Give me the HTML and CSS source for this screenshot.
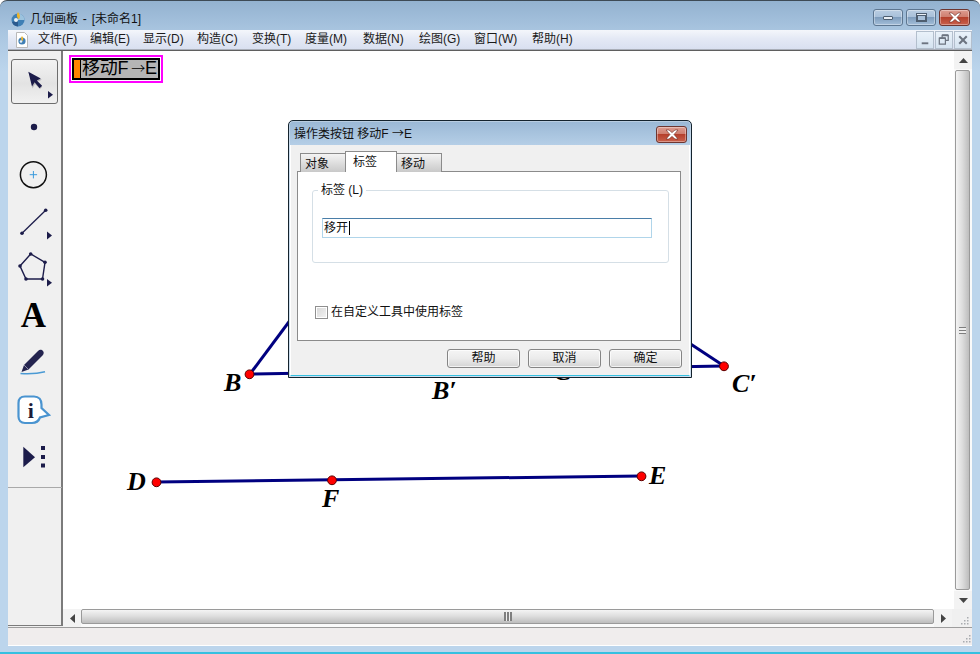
FILE: index.html
```html
<!DOCTYPE html>
<html lang="zh-CN">
<head>
<meta charset="utf-8">
<title>几何画板</title>
<link rel="stylesheet" href="styles.css">
</head>
<body>
<div class="window">
  <header class="titlebar">
    <svg class="app-icon" viewBox="0 0 16 16"><circle cx="8" cy="9" r="6.5" fill="#3f7fb5"/><path d="M8 2.5a6.5 6.5 0 0 1 6.5 6.5H8z" fill="#9cc3de"/><path d="M2 11a6.5 6.5 0 0 0 6 4.4V9z" fill="#2b5a8e"/><path d="M8 1c2 2 2.6 5 1 7-2-.6-3-4 -1-7z" fill="#f0b429"/><circle cx="6" cy="9" r="2" fill="#e8f1f7"/></svg>
    <span class="title-text">几何画板 - [未命名1]</span>
    <div class="win-controls">
      <div class="win-btn"><span class="glyph-min"></span></div>
      <div class="win-btn"><span class="glyph-max"></span></div>
      <div class="win-btn close"><svg class="glyph-x" viewBox="0 0 16 11"><path d="M2 1h3l3 2.6L11 1h3l-4 4.5 4 4.5h-3L8 7.4 5 10H2l4-4.5z" fill="#fff" stroke="#6b2a22" stroke-width=".6"/></svg></div>
    </div>
  </header>

  <div class="client">
    <nav class="menubar">
      <svg class="doc-icon" viewBox="0 0 14 16"><path d="M1.5.5h8l3 3v12h-11z" fill="#fff" stroke="#b9b9b9"/><circle cx="7" cy="9" r="3.6" fill="#3f7fb5"/><path d="M7 4c1.4 1.4 1.6 3.6.5 5-1.400-.5-2-3-.5-5z" fill="#f0b429"/><circle cx="6" cy="9.500" r="1.300" fill="#e8f1f7"/></svg>
      <span class="menu-item">文件(F)</span>
      <span class="menu-item">编辑(E)</span>
      <span class="menu-item">显示(D)</span>
      <span class="menu-item">构造(C)</span>
      <span class="menu-item">变换(T)</span>
      <span class="menu-item">度量(M)</span>
      <span class="menu-item">数据(N)</span>
      <span class="menu-item">绘图(G)</span>
      <span class="menu-item">窗口(W)</span>
      <span class="menu-item">帮助(H)</span>
      <div class="mdi-controls">
        <div class="mdi-btn"><svg viewBox="0 0 17 17"><rect x="5" y="11" width="7" height="2" fill="#6c7480"/></svg></div>
        <div class="mdi-btn"><svg viewBox="0 0 17 17"><path d="M6.500 6V3.500h6.500V9H10.500M3.500 6.500H10V13H3.500z" fill="none" stroke="#6c7480" stroke-width="1.300"/><path d="M3.500 6.500H10M6.500 3.500h6.500" stroke="#6c7480" stroke-width="2"/></svg></div>
        <div class="mdi-btn"><svg viewBox="0 0 17 17"><path d="M4.500 4.500l8 8M12.500 4.500l-8 8" stroke="#6c7480" stroke-width="2.200"/></svg></div>
      </div>
    </nav>

    <div class="main">
      <aside class="tools">
        <div class="tool selected">
          <svg class="tool-svg-sel" viewBox="12 60 45 43">
            <path d="M29.500 73.500l3 15 2.500-4.500 5 5 2.300-2.300-5-5 4.500-2z" fill="#8f8f96" opacity=".55"/>
            <path d="M28.300 71.700l3.700 14.800 2.600-4.300 5 6 2.500-2.400-5.300-5.300 4-2z" fill="#1c1c4a"/>
            <path d="M48 91l5 3.800-5 3.800z" fill="#1c1c4a"/>
          </svg>
        </div>
        <div class="tool"><svg viewBox="8 104 54 47"><circle cx="34" cy="127" r="3.200" fill="#1c1c4a"/></svg></div>
        <div class="tool"><svg viewBox="8 151 54 47"><circle cx="33.400" cy="174.700" r="13" fill="none" stroke="#111" stroke-width="1.500"/><path d="M33.400 171v7.400M29.700 174.700h7.400" stroke="#3b9bdc" stroke-width="1"/></svg></div>
        <div class="tool"><svg viewBox="8 198 54 47"><path d="M22 233.300L45.700 210.300" stroke="#1c1c4a" stroke-width="1.300"/><circle cx="22" cy="233.300" r="1.800" fill="#1c1c4a"/><circle cx="45.700" cy="210.300" r="1.800" fill="#1c1c4a"/><path d="M47 231.500l5 4-5 4z" fill="#1c1c4a"/></svg></div>
        <div class="tool"><svg viewBox="8 245 54 47"><path d="M20 266L30.700 254 45 262.300 42.500 279H26z" fill="none" stroke="#1c1c4a" stroke-width="1.400"/><g fill="#1c1c4a"><circle cx="20" cy="266" r="1.800"/><circle cx="30.700" cy="254" r="1.800"/><circle cx="45" cy="262.300" r="1.800"/><circle cx="42.500" cy="279" r="1.800"/><circle cx="26" cy="279" r="1.800"/><path d="M47 279l5 3.800-5 3.800z"/></g></svg></div>
        <div class="tool"><svg viewBox="8 292 54 47"><text class="tool-a" x="33.500" y="326.500">A</text></svg></div>
        <div class="tool"><svg viewBox="8 339 54 47"><path d="M21.500 372l2.500-7 14-14c2-2 4-1 5 0s1 3-.5 4.500l-14 14z" fill="#24244f"/><path d="M24 365l4.500 4.500" stroke="#8e8ea8" stroke-width="1"/><path d="M20.500 373.500c8 .5 16 .5 24.500-1.800" fill="none" stroke="#4a9ad4" stroke-width="1.600"/></svg></div>
        <div class="tool"><svg viewBox="8 386 54 47"><path d="M25 396.500h9c5 0 7.500 3.500 7.500 8v3.500l7.500 7-9 2.500c-1.500 4-4 5.500-8 5.500H25c-4.500 0-6.500-3-6.500-6.500V403c0-4 2.500-6.500 6.500-6.500z" fill="#fff" stroke="#4a94d0" stroke-width="2.200"/><text class="tool-i" x="30.700" y="418">i</text></svg></div>
        <div class="tool"><svg viewBox="8 433 54 47"><path d="M23.300 446.700L35 457.300 23.300 467.300z" fill="#1c1c4a"/><path d="M41 446h4v4h-4zM41 455h4v4h-4zM41 463.500h4v4h-4z" fill="#1c1c4a"/></svg></div>
        <div class="tools-sep"></div>
      </aside>

      <div class="work">
        <div class="work-top">
          <div class="canvas">
            <svg class="sketch" viewBox="63 51 891 558">
              <g class="seg">
                <path d="M250 374L300 307"/>
                <path d="M250 374L724 366"/>
                <path d="M724 366L680 337"/>
                <path d="M156 482L641 476"/>
              </g>
              <g class="pt">
                <circle cx="249.500" cy="374.300" r="4.400"/>
                <circle cx="724" cy="366.300" r="4.400"/>
                <circle cx="156.500" cy="482.300" r="4.400"/>
                <circle cx="332" cy="480.300" r="4.400"/>
                <circle cx="641.500" cy="476.300" r="4.400"/>
              </g>
              <g class="lbl">
                <text x="224" y="391">B</text>
                <text x="432" y="399">B′</text>
                <text x="554" y="380">C</text>
                <text x="732" y="392">C′</text>
                <text x="127" y="490">D</text>
                <text x="649" y="484">E</text>
                <text x="322" y="507">F</text>
              </g>
            </svg>
            <div class="action-btn">
              <div class="action-inner"><span class="action-swatch"></span><span class="action-text">移动F <span class="arrow">→</span>E</span></div>
            </div>
          </div>
          <div class="vscroll">
            <div class="arrow-cell"><svg viewBox="0 0 9 5"><path d="M4.500 0L9 5H0z" fill="#444"/></svg></div>
            <div class="vthumb"><span class="grip-v"></span></div>
            <div class="arrow-cell"><svg viewBox="0 0 9 5"><path d="M0 0h9L4.500 5z" fill="#444"/></svg></div>
          </div>
        </div>
        <div class="hscroll">
          <div class="arrow-cell-h"><svg viewBox="0 0 5 9"><path d="M5 0v9L0 4.500z" fill="#444"/></svg></div>
          <div class="hthumb"><span class="grip-h"></span></div>
          <div class="arrow-cell-h"><svg viewBox="0 0 5 9"><path d="M0 0l5 4.500L0 9z" fill="#444"/></svg></div>
          <div class="corner"><svg class="size-grip" viewBox="0 0 9 9"><path d="M7 1h1.500v1.500H7zM7 4h1.500v1.500H7zM4 4h1.500v1.500H4zM7 7h1.500v1.500H7zM4 7h1.500v1.500H4zM1 7h1.500v1.500H1z" fill="#a9acb0"/></svg></div>
        </div>
      </div>
    </div>

    <footer class="statusbar"><svg class="size-grip" viewBox="0 0 9 9"><path d="M7 1h1.500v1.500H7zM7 4h1.500v1.500H7zM4 4h1.500v1.500H4zM7 7h1.500v1.500H7zM4 7h1.500v1.500H4zM1 7h1.500v1.500H1z" fill="#a9acb0"/></svg></footer>
  </div>

  <section class="dialog">
    <div class="dlg-title">
      <span>操作类按钮 移动F <span class="arrow-small">→</span>E</span>
      <div class="win-btn close dlg-close"><svg class="glyph-x" viewBox="0 0 16 11"><path d="M2 1h3l3 2.600L11 1h3l-4 4.500 4 4.500h-3L8 7.400 5 10H2l4-4.500z" fill="#fff" stroke="#6b2a22" stroke-width=".6"/></svg></div>
    </div>
    <div class="dlg-body">
      <div class="tabs">
        <span class="tab">对象</span>
        <span class="tab active">标签</span>
        <span class="tab">移动</span>
      </div>
      <div class="pane">
        <fieldset class="group">
          <legend class="group-legend">标签 (L)</legend>
          <div class="input"><span>移开</span><span class="caret"></span></div>
        </fieldset>
        <label class="check"><span class="checkbox"></span><span>在自定义工具中使用标签</span></label>
      </div>
      <div class="dlg-buttons">
        <span class="btn">帮助</span>
        <span class="btn">取消</span>
        <span class="btn">确定</span>
      </div>
    </div>
  </section>
</div>
</body>
</html>
```
FILE: styles.css
```css
* { box-sizing: border-box; }
html, body { margin: 0; padding: 0; background: #fff; }
body { font: 12px/1.2 "Liberation Sans", "Noto Sans CJK SC", sans-serif; color: #111; }
svg { display: block; }

.window {
  position: relative;
  width: 980px;
  height: 654px;
  display: flex;
  flex-direction: column;
  overflow: hidden;
  border-radius: 7px 7px 0 0;
  border-top: 1px solid #3d4a55;
  border-bottom: 2px solid #35c0e0;
  background: linear-gradient(#93b2d0 0, #a9c5e0 30px, #bcd5ec 70px, #bcd5ec 100%);
}

/* title bar */
.titlebar { height: 29px; flex: none; display: flex; align-items: center; padding: 7px 10px 0 10px; }
.app-icon { width: 16px; height: 16px; margin-right: 4px; }
.title-text { color: #111; word-spacing: 1.500px; }
.win-controls { margin-left: auto; display: flex; gap: 3px; margin-top: -3px; }
.win-btn {
  width: 30px; height: 17px;
  display: flex; align-items: center; justify-content: center;
  border: 1px solid #5d7690; border-radius: 3px;
  background: linear-gradient(#b9cde2 0, #a9c1da 45%, #7f9dbd 50%, #a3bed9 100%);
  box-shadow: inset 0 0 0 1px rgba(255,255,255,.35);
}
.win-btn.close { width: 31px; border-color: #6e3630; background: linear-gradient(#dd9c90 0, #cf7f70 45%, #b5402c 50%, #c9614c 100%); }
.glyph-min { width: 10px; height: 4px; background: #e9eff6; border: 1px solid #4e5e70; border-radius: 1px; }
.glyph-max { width: 11px; height: 9px; border: 1px solid #4e5e70; background: #e9eff6; display: flex; align-items: center; justify-content: center; }
.glyph-max::before { content: ""; width: 7px; height: 4px; background: #a9c1da; border: 1px solid #4e5e70; }
.glyph-x { width: 16px; height: 11px; }

/* client */
.client { flex: 1; margin: 0 8px 6px; display: flex; flex-direction: column; min-height: 0; }

.menubar {
  height: 20px; flex: none;
  display: flex; align-items: center;
  padding-left: 7px;
  background: linear-gradient(#f4f6fb 0, #e4e9f5 45%, #d9e0f0 100%);
  border-bottom: 1px solid #a9aeb8;
}
.doc-icon { width: 14px; height: 16px; margin-right: 9px; }
.menu-item { flex: none; color: #1a1a1a; white-space: nowrap; width: 53px; }
.menu-item:nth-of-type(1) { width: 52px; }
.menu-item:nth-of-type(3) { width: 54px; }
.menu-item:nth-of-type(4) { width: 55px; }
.menu-item:nth-of-type(6) { width: 58px; }
.menu-item:nth-of-type(7) { width: 56px; }
.menu-item:nth-of-type(8) { width: 55px; }
.menu-item:nth-of-type(9) { width: 58px; }
.mdi-controls { margin-left: auto; display: flex; gap: 1px; }
.mdi-btn { width: 18px; height: 18px; border: 1px solid #b3bfcd; background: linear-gradient(#eaf2fa, #d5e3f0); }

.main { height: 577px; flex: none; display: flex; border-top: 1px solid #5f5f5f; background: #f0f0f0; }

/* tools */
.tools {
  width: 55px; flex: none; height: 575px;
  padding-top: 8px;
  display: flex; flex-direction: column;
  background: #f0f0f0;
  border-right: 2px solid #7b7b7b;
  border-bottom: 1px solid #7b7b7b;
}
.tool { width: 53px; height: 47px; flex: none; }
.tool svg { width: 54px; height: 47px; }
.tool.selected {
  width: 47px; height: 45px; margin-left: 3px;
  border: 1px solid #6d6d6d; border-radius: 3px;
  background: linear-gradient(#f3f3f3 0, #e3e3e3 55%, #f1f1f1 100%);
}
.tool-svg-sel.tool-svg-sel { width: 45px; height: 43px; }
.tools-sep { margin-top: 7px; border-top: 1px solid #a9a9a9; margin-right: -1px; }
.tool-a { font: bold 35px "Liberation Serif", serif; text-anchor: middle; fill: #000; }
.tool-i { font: bold 22px "Liberation Serif", serif; text-anchor: middle; fill: #1c1c3a; }

/* workspace */
.work { flex: 1; display: flex; flex-direction: column; min-width: 0; }
.work-top { flex: 1; display: flex; min-height: 0; }
.canvas { position: relative; flex: 1; background: #fff; min-width: 0; }
.sketch { position: absolute; left: 0; top: 0; width: 891px; height: 558px; }
.seg path { stroke: #000080; stroke-width: 3; fill: none; }
.pt circle { fill: #f00; stroke: #5a0000; stroke-width: 1; }
.lbl text { font: italic bold 26px "Liberation Serif", serif; fill: #000; }

.action-btn { position: absolute; left: 6px; top: 4px; width: 94px; height: 28px; border: 2px solid #f0f; background: #fff; padding: 1px; }
.action-inner { height: 22px; border: 2px solid #000; display: flex; background: #b5b5b5; }
.action-swatch { flex: none; width: 7px; margin-right: 1px; background: #ff8400; border-right: 1px solid #000; }
.action-text { flex: none; font-size: 18px; line-height: 17px; color: #000; white-space: nowrap; letter-spacing: -.2px; word-spacing: -2px; }
.arrow { font: 300 14px/1 "Noto Sans CJK SC", sans-serif; vertical-align: 1px; }
.arrow-small { font-family: "Noto Sans CJK SC", sans-serif; }

.vscroll { width: 18px; flex: none; display: flex; flex-direction: column; background: #fafafa; }
.arrow-cell { height: 18px; flex: none; display: flex; align-items: center; justify-content: center; background: #f3f3f3; }
.arrow-cell svg { width: 9px; height: 5px; }
.vthumb { flex: 1; margin: 1px 2px 1px 1px; border: 1px solid #9a9a9a; border-radius: 2px; background: linear-gradient(90deg, #f4f4f4, #dcdcdc 50%, #bdbdbd); display: flex; align-items: center; justify-content: center; }
.grip-v { width: 7px; height: 7px; background: repeating-linear-gradient(#7e7e7e 0 1px, #eee 1px 3px); }

.hscroll { height: 18px; flex: none; display: flex; background: #fafafa; }
.arrow-cell-h { width: 18px; flex: none; display: flex; align-items: center; justify-content: center; background: #f3f3f3; }
.arrow-cell-h svg { width: 5px; height: 9px; }
.hthumb { flex: 1; margin: 0 0 3px; border: 1px solid #9a9a9a; border-radius: 2px; background: linear-gradient(#f4f4f4, #dcdcdc 50%, #bdbdbd); display: flex; align-items: center; justify-content: center; }
.grip-h { width: 8px; height: 9px; background: repeating-linear-gradient(90deg, #7e7e7e 0 2px, #eee 2px 3px); }
.corner { width: 20px; flex: none; display: flex; align-items: flex-end; justify-content: flex-end; padding: 0 3px 2px 0; background: #f0f0f0; }
.size-grip { width: 9px; height: 9px; }

.statusbar {
  height: 19px; flex: none;
  display: flex; align-items: flex-end; justify-content: flex-end;
  padding: 0 1px 2px 0;
  border-top: 1px solid #9d9d9d;
  border-bottom: 1px solid #fff;
  background: #f0eded;
}

/* dialog */
.dialog {
  position: absolute; left: 288px; top: 119px;
  width: 404px; height: 258px;
  display: flex; flex-direction: column;
  border: 1px solid #14232e;
  border-radius: 5px 5px 0 0;
  background: linear-gradient(#9ab8d5 0, #b7d0e8 26px);
  box-shadow: inset 0 0 0 1px rgba(255,255,255,.3);
  padding: 0 1px 1px;
}
.dlg-title { height: 24px; flex: none; display: flex; align-items: center; justify-content: space-between; padding: 1px 3px 0 4px; }
.dlg-close { margin-top: 1px; }
.dlg-body { flex: 1; background: #f0f0f0; border-bottom: 1px solid #35c0e0; border-left: 1px solid #fff; border-right: 1px solid #fff; padding: 6px 8px 0 6px; display: flex; flex-direction: column; }

.tabs { height: 21px; flex: none; display: flex; align-items: flex-end; padding-left: 3px; position: relative; z-index: 1; margin-bottom: -1px; }
.tab { width: 46px; height: 19px; padding: 3px 0 0 4px; border: 1px solid #8b8b8b; border-bottom: 0; margin-right: -1px; background: linear-gradient(#f4f4f4, #dcdcdc 55%, #c9c9c9); }
.tab.active { width: 52px; height: 21px; background: #fff; padding: 3px 0 0 7px; border-bottom: 0; position: relative; z-index: 2; }

.pane { height: 170px; flex: none; background: #fff; border: 1px solid #8b8b8b; padding: 11px 11px 0 14px; display: flex; flex-direction: column; }
.group { height: 80px; flex: none; margin: 0; padding: 21px 16px 0 9px; border: 1px solid #d5dfe6; border-radius: 3px; }
.group-legend { padding: 0 3px; margin-left: -4px; line-height: 14px; }
.input { height: 20px; display: flex; align-items: center; padding-left: 1px; border: 1px solid #b0d5ea; border-top-color: #4a7ea8; }
.caret { width: 1px; height: 14px; background: #000; margin-left: 1px; }
.check { margin: 42px 0 0 3px; display: flex; align-items: center; gap: 3px; }
.checkbox { width: 13px; height: 13px; border: 1px solid #8f8f8f; background: linear-gradient(135deg, #d6d6d6, #f4f4f4); box-shadow: inset 0 0 0 1px #fff; }

.dlg-buttons { flex: 1; display: flex; justify-content: flex-end; align-items: flex-start; gap: 8px; padding-top: 8px; margin-right: -1px; }
.btn { width: 73px; height: 19px; text-align: center; line-height: 17px; border: 1px solid #858585; border-radius: 3px; background: linear-gradient(#f5f5f5, #ebebeb 50%, #d4d4d4); box-shadow: inset 0 0 0 1px rgba(255,255,255,.7); }
```
